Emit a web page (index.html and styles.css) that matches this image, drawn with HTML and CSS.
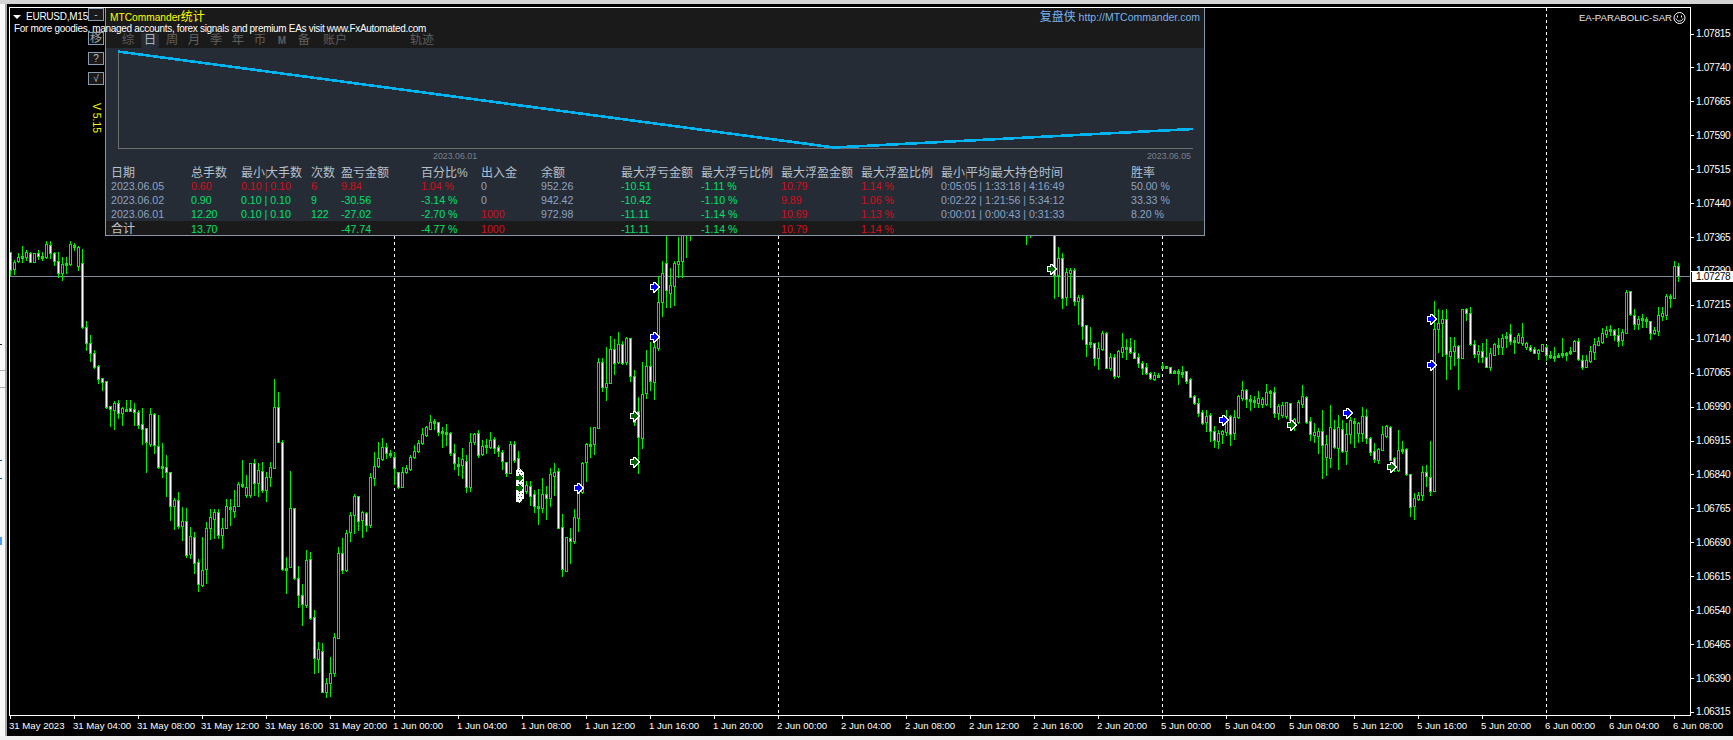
FILE: index.html
```html
<!DOCTYPE html>
<html lang="zh">
<head>
<meta charset="utf-8">
<title>EURUSD,M15</title>
<link rel="stylesheet" href="styles.css">
</head>
<body>
<div class="topbar"></div>
<div class="workspace">
  <div class="side-strip"></div>
  <div class="terminal">
    <div class="chart">
      <svg id="plot" class="plot" width="1680" height="707" viewBox="10 8 1680 707" xmlns="http://www.w3.org/2000/svg"></svg>

      <section class="panel">
        <div class="panel-top">
          <div class="title-row">
            <span class="title">MTCommander<span class="cjk-title">统计</span></span>
            <span class="site"><span class="site-cn">复盘侠</span> http://MTCommander.com</span>
          </div>
          <div class="tabs">
            <span class="tab">综</span><span class="tab tab-on">日</span><span class="tab">周</span><span class="tab">月</span><span class="tab">季</span><span class="tab">年</span><span class="tab">币</span><span class="tab tab-m">M</span><span class="tab">备</span><span class="tab tab-wide">账户</span><span class="tab tab-wide tab-far">轨迹</span>
          </div>
        </div>
        <div class="panel-body">
          <svg class="equity" width="1098" height="102" viewBox="0 0 1098 102" xmlns="http://www.w3.org/2000/svg">
            <path class="equity-axis" d="M12.5 3V100.5H1087"/>
            <polyline class="equity-line" points="12,3.5 728,99.5 1087,81"/>
          </svg>
          <div class="equity-dates"><span>2023.06.01</span><span>2023.06.05</span></div>
          <div class="row row-head">
            <span>日期</span><span>总手数</span><span>最小<i class="sep">|</i>大手数</span><span>次数</span><span>盈亏金额</span><span>百分比%</span><span>出入金</span><span>余额</span><span>最大浮亏金额</span><span>最大浮亏比例</span><span>最大浮盈金额</span><span>最大浮盈比例</span><span>最小<i class="sep">|</i>平均<i class="sep">|</i>最大持仓时间</span><span>胜率</span>
          </div>
          <div class="row">
            <span>2023.06.05</span><span class="r">0.60</span><span class="r">0.10 | 0.10</span><span class="r">6</span><span class="r">9.84</span><span class="r">1.04 %</span><span>0</span><span>952.26</span><span class="g">-10.51</span><span class="g">-1.11 %</span><span class="r">10.79</span><span class="r">1.14 %</span><span>0:05:05 | 1:33:18 | 4:16:49</span><span>50.00 %</span>
          </div>
          <div class="row">
            <span>2023.06.02</span><span class="g">0.90</span><span class="g">0.10 | 0.10</span><span class="g">9</span><span class="g">-30.56</span><span class="g">-3.14 %</span><span>0</span><span>942.42</span><span class="g">-10.42</span><span class="g">-1.10 %</span><span class="r">9.89</span><span class="r">1.06 %</span><span>0:02:22 | 1:21:56 | 5:34:12</span><span>33.33 %</span>
          </div>
          <div class="row">
            <span>2023.06.01</span><span class="g">12.20</span><span class="g">0.10 | 0.10</span><span class="g">122</span><span class="g">-27.02</span><span class="g">-2.70 %</span><span class="r">1000</span><span>972.98</span><span class="g">-11.11</span><span class="g">-1.14 %</span><span class="r">10.69</span><span class="r">1.13 %</span><span>0:00:01 | 0:00:43 | 0:31:33</span><span>8.20 %</span>
          </div>
          <div class="row row-total">
            <span class="total-label">合计</span><span class="g">13.70</span><span></span><span></span><span class="g">-47.74</span><span class="g">-4.77 %</span><span class="r">1000</span><span></span><span class="g">-11.11</span><span class="g">-1.14 %</span><span class="r">10.79</span><span class="r">1.14 %</span><span></span><span></span>
          </div>
        </div>
      </section>

      <div class="symbol"><span class="symbol-arrow"></span>EURUSD,M15</div>
      <div class="promo">For more goodies, managed accounts, forex signals and premium EAs visit www.FxAutomated.com</div>
      <div class="tools">
        <span class="tool">-</span>
        <span class="tool tool-move">移</span>
        <span class="tool">?</span>
        <span class="tool">√</span>
        <span class="version">V 5.15</span>
      </div>
      <div class="ea-name">EA-PARABOLIC-SAR
        <svg class="smiley" width="13" height="12" viewBox="0 0 13 12" xmlns="http://www.w3.org/2000/svg">
          <circle cx="6.5" cy="6" r="5.5"/>
          <path d="M3 6.5C4 10 9 10 10 6.5"/>
          <path class="eye" d="M4.5 3.5v2M8.5 3.5v2"/>
        </svg>
      </div>
    </div>

    <div class="price-axis">
      <span class="price">1.07815</span><span class="price">1.07740</span><span class="price">1.07665</span><span class="price">1.07590</span><span class="price">1.07515</span><span class="price">1.07440</span><span class="price">1.07365</span><span class="price">1.07290</span><span class="price">1.07215</span><span class="price">1.07140</span><span class="price">1.07065</span><span class="price">1.06990</span><span class="price">1.06915</span><span class="price">1.06840</span><span class="price">1.06765</span><span class="price">1.06690</span><span class="price">1.06615</span><span class="price">1.06540</span><span class="price">1.06465</span><span class="price">1.06390</span><span class="price">1.06315</span>
      <span class="price-tag">1.07278</span>
    </div>

    <div class="time-axis">
      <span>31 May 2023</span><span>31 May 04:00</span><span>31 May 08:00</span><span>31 May 12:00</span><span>31 May 16:00</span><span>31 May 20:00</span>
      <span>1 Jun 00:00</span><span>1 Jun 04:00</span><span>1 Jun 08:00</span><span>1 Jun 12:00</span><span>1 Jun 16:00</span><span>1 Jun 20:00</span>
      <span>2 Jun 00:00</span><span>2 Jun 04:00</span><span>2 Jun 08:00</span><span>2 Jun 12:00</span><span>2 Jun 16:00</span><span>2 Jun 20:00</span>
      <span>5 Jun 00:00</span><span>5 Jun 04:00</span><span>5 Jun 08:00</span><span>5 Jun 12:00</span><span>5 Jun 16:00</span><span>5 Jun 20:00</span>
      <span>6 Jun 00:00</span><span>6 Jun 04:00</span><span>6 Jun 08:00</span>
    </div>
  </div>
</div>
<div class="bottombar"></div>
<script src="chart.js"></script>
</body>
</html>
```

FILE: styles.css
```css
* { box-sizing: border-box; }

html, body {
  margin: 0;
  height: 740px;
  overflow: hidden;
  background: #f0f0f0;
  font-family: "Liberation Sans", "Noto Sans CJK SC", sans-serif;
}

.topbar {
  height: 4px;
  background: #d4d4d4;
}

.bottombar {
  height: 4px;
  background: #f0f0f0;
}

.workspace {
  display: flex;
  height: 732px;
}

.side-strip {
  width: 7px;
  border-right: 2px solid #a8a8a8;
  background-color: #f8f8f8;
  background-repeat: no-repeat;
  background-image:
    linear-gradient(#b0b0b0, #b0b0b0),
    linear-gradient(#b0b0b0, #b0b0b0),
    linear-gradient(#1a4fb0, #1a4fb0),
    linear-gradient(#1a4fb0, #1a4fb0),
    linear-gradient(#4a9ff0, #4a9ff0),
    linear-gradient(#222, #222);
  background-size: 5px 1px, 5px 1px, 2px 1px, 2px 1px, 2px 8px, 2px 1px;
  background-position: 0 366px, 0 383px, 0 456px, 0 474px, 0 533px, 0 340px;
}

.terminal {
  flex: 1;
  display: grid;
  grid-template-columns: 1684px 42px;
  grid-template-rows: 712px 20px;
  background: #000;
}

/* chart frame */
.chart {
  position: relative;
  margin: 3px 0 0 2px;
  border: 1px solid #fff;
}

.plot {
  display: block;
  shape-rendering: crispEdges;
}

/* statistics panel */
.panel {
  position: absolute;
  left: 95px;
  top: 0;
  width: 1100px;
  height: 228px;
  display: flex;
  flex-direction: column;
  background: #252c35;
  border: 1px solid #8695a8;
  border-top: 0;
}

.panel-top {
  height: 40px;
  background: #1a1a1a;
}

.title-row {
  height: 24px;
  display: flex;
  justify-content: space-between;
  padding: 2px 4px 0 4px;
}

.title {
  color: #ffff00;
  font-size: 10.2px;
  line-height: 14px;
}

.cjk-title {
  font-size: 12px;
}

.site {
  color: #79b2ea;
  font-size: 10.5px;
  line-height: 14px;
}

.site-cn {
  font-size: 12px;
}

.tabs {
  display: flex;
  height: 16px;
  padding: 1px 0 0 11px;
  font-size: 12.5px;
  line-height: 15px;
  color: #5e5e5e;
}

.tab {
  width: 22px;
  text-align: center;
}

.tab-on {
  width: 18px;
  margin: 0 2px;
  background: #252c35;
  color: #a9b2bd;
  border-radius: 2px;
}

.tab-m {
  font-size: 10px;
  font-weight: bold;
}

.tab-wide {
  width: 36px;
  margin-left: 2px;
  font-size: 12px;
}

.tab-far {
  margin-left: 51px;
}

.panel-body {
  flex: 1;
  display: flex;
  flex-direction: column;
}

.equity {
  display: block;
  flex: none;
  shape-rendering: crispEdges;
}

.equity-axis {
  fill: none;
  stroke: #6e6e6e;
  stroke-width: 1;
}

.equity-line {
  fill: none;
  stroke: #00b4f0;
  stroke-width: 2.6;
}

.equity-dates {
  height: 16px;
  display: flex;
  justify-content: space-between;
  padding: 0 13px 0 327px;
  font-size: 8.8px;
  line-height: 12px;
  color: #7a818c;
}

.row {
  display: grid;
  grid-template-columns: 80px 50px 70px 30px 80px 60px 60px 80px 80px 80px 80px 80px 190px 70px;
  height: 14px;
  padding-left: 5px;
  font-size: 10.6px;
  line-height: 14px;
  color: #8ea2c2;
  white-space: nowrap;
}

.row-head {
  height: 13px;
  font-size: 12px;
  line-height: 14px;
  color: #b6c0ce;
}

.row-total {
  height: 14px;
  line-height: 16px;
  background: #1a1a1a;
}

.total-label {
  font-size: 12px;
  color: #c2c6cc;
}

.sep {
  font-style: normal;
  display: inline-block;
  width: 1px;
  color: #8d6f46;
  font-size: 10px;
}

.r { color: #d40d1a; }
.g { color: #00e068; }

/* texts drawn over the chart */
.symbol {
  position: absolute;
  left: 3px;
  top: 3px;
  display: flex;
  align-items: center;
  color: #fff;
  font-size: 10px;
  line-height: 12px;
  letter-spacing: -0.25px;
}

.symbol-arrow {
  width: 0;
  height: 0;
  margin-right: 5px;
  border-left: 4px solid transparent;
  border-right: 4px solid transparent;
  border-top: 4px solid #fff;
}

.promo {
  position: absolute;
  left: 4px;
  top: 15px;
  color: #fff;
  font-size: 10px;
  line-height: 12px;
  letter-spacing: -0.31px;
  white-space: nowrap;
}

.tools {
  position: absolute;
  left: 78px;
  top: 0;
  width: 16px;
  display: flex;
  flex-direction: column;
}

.tool {
  height: 13px;
  margin-bottom: 7px;
  border: 1px solid #8a9ab0;
  background: #1a1a1a;
  color: #b8c0c8;
  font-size: 10px;
  line-height: 11px;
  text-align: center;
}

.tool-move {
  margin-top: 4px;
  font-size: 12px;
  background: #111;
  color: #a0a0a0;
}

.version {
  margin-top: 11px;
  writing-mode: vertical-rl;
  align-self: center;
  color: #ffff00;
  font-size: 10.4px;
  line-height: 12px;
  white-space: nowrap;
}

.ea-name {
  position: absolute;
  right: 4px;
  top: 2px;
  display: flex;
  align-items: center;
  gap: 1px;
  color: #e8e8e8;
  font-size: 9.6px;
  line-height: 15px;
}

.smiley { fill: none; stroke: #fff; stroke-width: 1; }

/* price axis */
.price-axis {
  position: relative;
  padding-top: 13px;
  display: flex;
  flex-direction: column;
  height: 712px;
}

.price {
  position: relative;
  flex: none;
  height: 33.93px;
  line-height: 33.93px;
  padding-left: 5px;
  color: #fff;
  font-size: 10.2px;
  letter-spacing: -0.35px;
}

.price::before {
  content: "";
  position: absolute;
  left: 0;
  top: 16.5px;
  width: 3px;
  height: 1px;
  background: #fff;
}

.price-tag {
  position: absolute;
  left: 1px;
  top: 267px;
  width: 41px;
  height: 11px;
  padding-left: 4px;
  background: #fff;
  color: #000;
  font-size: 10.2px;
  line-height: 11px;
  letter-spacing: -0.35px;
}

/* time axis */
.time-axis {
  grid-column: 1 / span 2;
  display: flex;
  padding: 0 0 0 2px;
  overflow: hidden;
}

.time-axis span {
  position: relative;
  flex: none;
  width: 64px;
  padding-top: 3px;
  color: #fff;
  font-size: 9.6px;
  line-height: 14px;
  white-space: nowrap;
}

.time-axis span::before {
  content: "";
  position: absolute;
  left: 1px;
  top: 0;
  width: 1px;
  height: 3px;
  background: #fff;
}
```

FILE: chart.js
```js
// Each candle: "w|h wickTop bodyTop bodyBottom wickBottom" in 3x coordinates.
var segments = [
  { start: 0, base: 240, rows: "w 37 37 90 105|h 60 67 87 102|h 40 52 62 65|h 18 48 52 65|h 30 37 52 60|w 35 40 65 65|h 40 40 65 65|w 30 40 48 58|h 35 49 52 60|h 3 13 52 55|w 3 15 40 55|w 35 40 62 75|w 37 62 100 110|h 50 73 98 120|h 52 69 72 98|h 3 13 72 75|w 8 15 22 30|h 18 22 77 90|w 27 70 262 265|w 243 262 308 330|w 285 308 340 362|w 330 340 380 385|w 375 378 418 430|w 415 415 425 450|w 423 423 500 505|w 497 497 508 558|h 482 490 510 567|w 480 490 518 533|h 500 505 520 555|h 480 506 509 510|w 480 505 512 512|w 490 508 515 555|w 510 515 555 565|w 503 553 567 612|w 565 565 607 695|h 505 523 612 617|w 518 522 615 640|w 525 617 680 685|h 610 677 680 712|w 645 680 695 768|w 697 697 797 840|h 775 780 797 868|w 755 780 858 865|h 802 842 858 900|w 805 842 945 952|h 860 888 942 955|w 875 892 968 1000|w 957 967 1033 1052|h 892 990 1035 1037|h 845 865 988 1028|h 808 832 865 898|h 808 815 838 895|w 808 815 885 895|h 835 865 885 925|h 778 797 865 865|w 778 800 808 855|h 750 797 812 830|h 725 733 797 797|w 660 732 738 740|h 705 740 765 772|h 668 668 765 770|w 658 668 728 765|h 670 690 728 768|w 665 692 750 755|h 695 710 750 782|h 665 680 710 738|h 418 500 683 685|w 457 502 605 605|w 600 607 988 990|h 950 983 986 1058|h 693 803 980 980|w 805 805 1015 1018|w 978 1015 1065 1100|w 1033 1065 1093 1155|h 930 960 1095 1100|w 937 958 1135 1138|w 1110 1130 1255 1300|h 1205 1228 1258 1295|w 1210 1232 1355 1355|h 1315 1330 1355 1370|h 1250 1298 1330 1368|h 1180 1192 1298 1308|h 920 940 1193 1195|w 895 940 990 1000|h 870 878 990 992|h 815 825 875 902|h 762 768 825 880|w 767 767 842 870|h 812 817 840 890|w 815 820 855 872|h 700 712 855 860|h 637 677 715 735|h 605 655 677 680|h 595 622 657 660|w 610 622 640 655|h 630 639 642 650|w 635 652 683 732|w 697 697 742 745|h 680 695 740 740|h 675 683 695 700|h 645 652 688 690|h 615 632 652 655|h 600 610 632 635|h 565 583 610 612|h 558 562 584 588|h 525 545 566 568|h 538 544 547 568|w 545 547 577 585|h 560 574 577 622|w 552 575 580 615|w 575 580 640 645|w 612 638 670 688|h 650 671 674 705|h 625 658 675 715|w 645 662 742 755|h 580 607 742 752|h 578 582 607 612|w 570 580 645 650|h 600 617 643 645|w 598 615 620 640|h 575 600 622 625|w 590 598 625 640|w 615 622 633 648" },
  { start: 123, base: 230, rows: "w 660 665 692 716|w 695 695 728 738|h 632 642 728 730|w 633 643 690 695|w 663 685 715 720|h 740 770 785 790|h 753 766 784 790|w 753 767 797 825|w 780 793 827 845|h 778 829 832 882|h 745 793 833 845|w 768 793 803 866|h 715 733 803 828|h 700 727 737 795|w 715 724 893 895|w 852 892 1018 1037|h 920 920 1022 1022|w 895 923 932 998|h 838 862 932 940|h 770 785 865 902|h 695 700 787 790|h 640 642 697 752|h 590 642 645 680|h 592 592 643 672|h 385 397 595 595|w 385 397 472 482|h 350 460 470 510|h 318 358 458 460|w 328 358 400 432|h 307 343 397 400|w 333 343 398 402|h 320 325 395 402|w 325 325 437 453|w 420 437 577 585|w 500 542 620 728|h 397 493 623 653|h 360 408 490 505|w 335 408 452 480|h 335 352 455 507|h 138 217 355 360|h 93 130 217 257|w -300 100 180 230|h 113 165 190 232|h 93 100 167 225|h 20 92 103 140|h -300 -200 92 140|h -300 -200 -100 80|h -300 -200 -100 30" },
  { start: 254, base: 230, rows: "h -300 -200 -100 42|h -300 -200 -100 22" },
  { start: 261, base: 230, rows: "w -300 -200 135 203|h 52 85 135 197|w 70 85 203 233|h 115 127 200 225|h 115 120 128 200|w 115 120 212 225|h 195 202 212 282|w 195 205 287 327|w 285 285 342 378|h 292 337 340 350|w 340 340 383 405|h 337 355 383 417|h 303 310 357 360|w 305 310 413 415|h 370 382 413 420|w 372 382 437 443|h 360 362 437 440|h 310 352 365 380|h 328 350 353 387|w 325 352 367 370|w 330 365 383 385|w 370 382 400 412|w 393 400 413 432|w 400 412 430 432|w 427 430 445 447|h 427 435 448 450|h 428 435 438 442|h 400 407 410 415|h 408 408 412 414|w 412 412 428 428|h 420 424 427 430|h 418 424 430 462|h 408 425 428 440|w 424 424 452 458|w 445 448 500 502|w 495 498 520 522|w 505 518 548 558|w 540 546 578 582|h 540 558 575 602|w 550 556 602 632|w 588 602 630 652|h 600 610 632 655|h 600 604 612 640|h 540 570 605 615|w 555 558 612 645|h 540 562 610 628|h 495 498 562 565|h 453 481 503 510|w 478 480 508 532|h 495 508 511 540|h 498 510 513 530|h 482 505 518 530|h 502 508 522 530|h 462 487 522 525|h 480 484 487 530|w 472 485 548 560|h 522 527 548 567|h 517 525 555 560|h 517 517 558 563|w 518 518 570 575|h 563 567 577 600|h 510 517 575 580|h 465 497 522 532|w 498 500 575 578|w 562 574 612 630|h 580 607 614 636|h 595 604 618 668|w 540 604 645 743|h 615 643 682 735|h 525 592 683 712|w 570 596 652 655|h 555 592 655 717|w 570 596 662 665|h 580 612 662 702|h 560 570 612 640|h 565 574 580 652|h 575 580 610 637|h 532 558 610 632|w 538 558 625 640|w 622 625 665 675|w 640 663 688 697|h 655 658 690 700|h 588 612 660 660|h 585 588 618 620|w 588 592 690 690|w 680 685 715 722|h 600 660 720 722|h 633 658 662 670|w 655 658 733 735|w 733 733 830 857|h 790 805 828 867|h 785 795 808 810|h 708 727 795 810|w 705 727 737 768|w 632 740 782 795|h 213 298 782 782|h 237 278 298 365|h 240 268 278 378|w 238 268 373 447|h 322 362 378 417|h 320 347 362 405|w 345 347 383 477|h 238 238 383 383|w 235 238 250 270|w 232 248 342 345|w 330 342 373 382|h 345 362 372 395|w 340 362 382 395|w 328 382 410 412|h 355 370 410 420|h 340 343 374 375|h 325 344 350 373" },
  { start: 373, base: 230, rows: "h 312 325 350 372|w 305 317 323 350|w 282 312 332 342|h 322 331 334 370|h 310 315 335 340|h 280 320 340 345|h 335 340 352 358|w 345 350 360 362|w 350 358 368 370|h 358 360 368 387|h 343 343 362 362|w 345 352 376 390|h 362 375 378 385|h 352 377 380 392|h 370 375 378 380|h 323 370 376 380|h 367 368 371 390|h 350 362 370 372|h 330 333 362 364|w 325 333 388 390|w 375 390 410 418|h 375 390 410 412|h 348 364 392 395|h 325 343 365 388|h 322 333 345 345|h 295 310 335 338|h 288 300 312 320|h 285 298 303 315|w 296 300 315 330|w 295 316 332 347|h 296 306 330 345|h 180 186 308 310|w 183 184 253 255|w 238 254 283 298|h 258 266 282 298|h 252 265 268 292|h 262 266 274 292|w 272 274 310 326|h 290 300 310 313|h 232 255 302 315|h 230 250 257 270|h 192 197 255 268|h 192 198 202 232|h 92 108 203 204|w 98 108 138 152" }
];

var markers = [
  [655, 287, "blue"], [655, 337, "blue"], [579, 488, "blue"],
  [635, 416, "green"], [635, 462, "green"],
  [1052, 269, "green"], [1224, 420, "blue"], [1292, 425, "green"],
  [1348, 413, "blue"], [1392, 467, "green"], [1432, 319, "blue"], [1432, 365, "blue"]
];

var svg = document.getElementById("plot");
var NS = "http://www.w3.org/2000/svg";

function add(name, attrs) {
  var el = document.createElementNS(NS, name);
  for (var k in attrs) el.setAttribute(k, attrs[k]);
  svg.appendChild(el);
  return el;
}

function rect(x, y, w, h, fill) {
  add("rect", { x: x, y: y, width: w, height: h, fill: fill });
}

// price line and day separators lie behind the candles
rect(10, 276, 1680, 1, "#7d8b9c");
[394, 778, 1162, 1546].forEach(function (x) {
  add("line", { x1: x + 0.5, y1: 8, x2: x + 0.5, y2: 715, stroke: "#fff", "stroke-width": 1, "stroke-dasharray": "3 3" });
});

var GREEN = "#00f000";
segments.forEach(function (seg) {
  seg.rows.split("|").forEach(function (row, n) {
    var p = row.split(" ");
    var x = 10 + 4 * (seg.start + n);
    var ys = p.slice(1).map(function (v) { return Math.round(seg.base + Number(v) / 3); });
    var h = Math.max(ys[2] - ys[1], 2);
    rect(x, ys[0], 1, ys[3] - ys[0] + 1, GREEN);
    rect(x - 1, ys[1], 3, h + 1, GREEN);
    if (h > 2) rect(x, ys[1] + 1, 1, h - 1, p[0] === "w" ? "#fff" : "#000");
  });
});

// trade arrows
var ARROW_OUT = "M-5 -3H-2V-5.5H0L5 0L0 5.5H-2V3H-5Z";
var ARROW_IN = "M-4 -2H-1V-4H0L3.5 0L0 4H-1V2H-4Z";
function arrow(x, y, color) {
  add("path", { d: ARROW_OUT, transform: "translate(" + x + " " + y + ")", fill: "#fff" });
  add("path", { d: ARROW_IN, transform: "translate(" + x + " " + y + ")", fill: color });
}
markers.forEach(function (m) {
  arrow(m[0], m[1], m[2] === "blue" ? "#0000ff" : "#006400");
});

// overlapping stack of closed-trade arrows
add("path", { d: "M516 470L519 468L524 473V498L519 503L516 502Z", fill: "#fff" });
for (var yy = 469; yy < 503; yy += 3) {
  for (var xx = 518 + (yy % 2); xx < 524; xx += 3) {
    rect(xx, yy, 1, 1, "#006400");
  }
}
[478, 488].forEach(function (y) {
  add("path", { d: ARROW_IN, transform: "translate(520 " + y + ")", fill: "#006400" });
});
```
